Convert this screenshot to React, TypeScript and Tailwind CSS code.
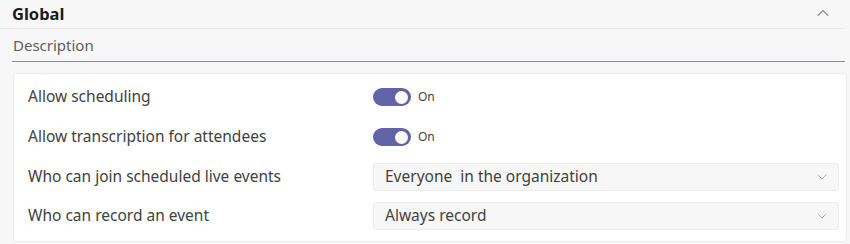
import { ChevronUp, ChevronDown } from "lucide-react";

const toggles = ["Allow scheduling", "Allow transcription for attendees"];

const selects = [
  { label: "Who can join scheduled live events", value: "Everyone  in the organization" },
  { label: "Who can record an event", value: "Always record" },
];

function Toggle() {
  return (
    <div className="flex items-center gap-[7px]">
      <div className="flex h-[18px] w-[38px] items-center justify-end rounded-full bg-[#6264a7] pr-[3px]">
        <div className="h-[13px] w-[13px] rounded-full bg-white" />
      </div>
      <span className="text-[12px] text-[#424242]">On</span>
    </div>
  );
}

export default function App() {
  return (
    <div className="h-[244px] w-[850px] bg-[#f7f7f7] font-['Noto_Sans',sans-serif] text-[#252423]">
      <div className="mr-[6px] flex h-[29px] items-center justify-between border-b border-[#e8e8e8] pl-[12px] pr-[11px]">
        <h2 className="text-[16.5px] font-bold leading-none text-[#1b1b1b]">Global</h2>
        <ChevronUp className="mb-[2px] h-5 w-5 text-[#8a8a8a]" strokeWidth={1.3} />
      </div>
      <div className="ml-[12px] mr-[5px] flex h-[33px] items-center border-b border-[#8c8c94] px-[1px]">
        <span className="text-[15px] text-[#605e5c]">Description</span>
      </div>
      <div className="ml-[13px] mr-[3px] mt-[11px] flex flex-col rounded-[3px] border border-[#ececec] bg-white px-[14px] pt-[3px] pb-[6px]">
        {toggles.map((t) => (
          <div key={t} className="flex h-[40px] items-center">
            <span className="w-[345px] text-[15.5px] text-[#424242]">{t}</span>
            <Toggle />
          </div>
        ))}
        {selects.map((s) => (
          <div key={s.label} className="flex h-[39px] items-center">
            <span className="w-[345px] text-[15.5px] text-[#424242]">{s.label}</span>
            <div className="mr-[-7px] flex h-[28px] flex-1 items-center justify-between rounded-[3px] border border-[#ececec] bg-[#f7f7f7] pl-[11px] pr-[8px]">
              <span className="whitespace-pre text-[15.5px] text-[#424242]">{s.value}</span>
              <ChevronDown className="h-4 w-4 text-[#b0b0b0]" strokeWidth={1.5} />
            </div>
          </div>
        ))}
      </div>
    </div>
  );
}
